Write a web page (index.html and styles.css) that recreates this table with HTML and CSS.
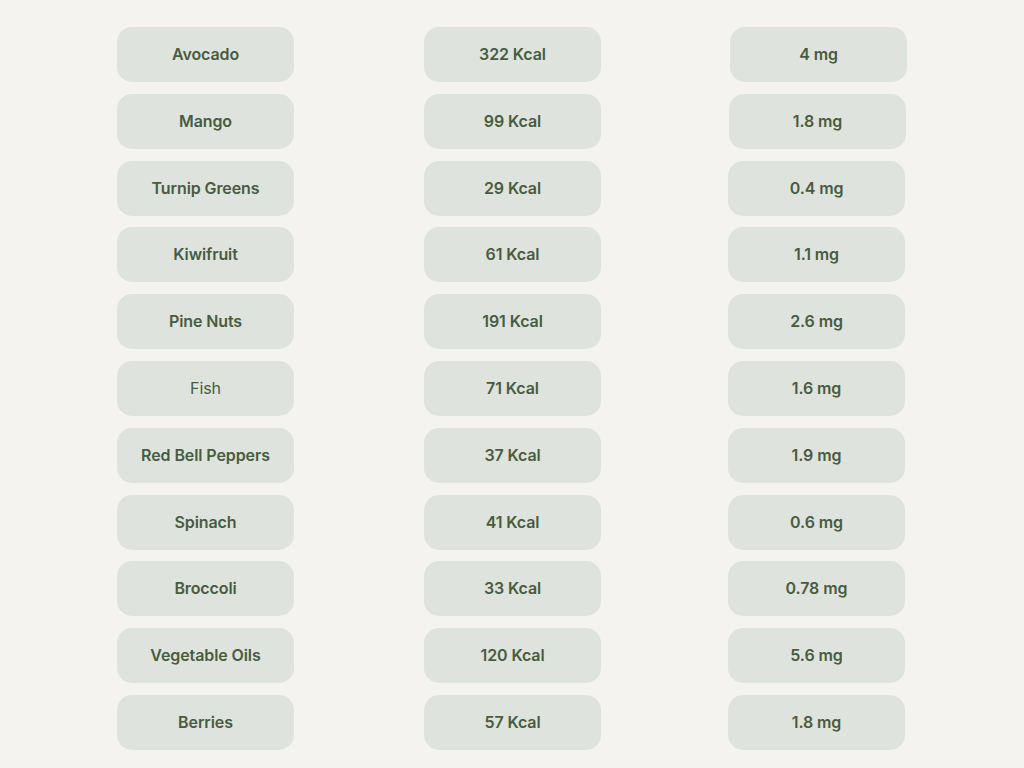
FILE: index.html
```html
<!DOCTYPE html>
<html>
<head>
<meta charset="utf-8">
<link rel="stylesheet" href="styles.css">
</head>
<body>
<div class="table">
  <div class="pill">Avocado</div><div class="pill">322 Kcal</div><div class="pill first">4 mg</div>
  <div class="pill">Mango</div><div class="pill">99 Kcal</div><div class="pill second">1.8 mg</div>
  <div class="pill">Turnip Greens</div><div class="pill">29 Kcal</div><div class="pill">0.4 mg</div>
  <div class="pill">Kiwifruit</div><div class="pill">61 Kcal</div><div class="pill">1.1 mg</div>
  <div class="pill">Pine Nuts</div><div class="pill">191 Kcal</div><div class="pill">2.6 mg</div>
  <div class="pill light">Fish</div><div class="pill">71 Kcal</div><div class="pill">1.6 mg</div>
  <div class="pill">Red Bell Peppers</div><div class="pill">37 Kcal</div><div class="pill">1.9 mg</div>
  <div class="pill">Spinach</div><div class="pill">41 Kcal</div><div class="pill">0.6 mg</div>
  <div class="pill">Broccoli</div><div class="pill">33 Kcal</div><div class="pill">0.78 mg</div>
  <div class="pill">Vegetable Oils</div><div class="pill">120 Kcal</div><div class="pill">5.6 mg</div>
  <div class="pill">Berries</div><div class="pill">57 Kcal</div><div class="pill">1.8 mg</div>
</div>
</body>
</html>
```
FILE: styles.css
```css
html, body {
  margin: 0;
  padding: 0;
  background: #f5f3f0;
}
body {
  font-family: Inter, "Open Sans", sans-serif;
  color: #485c3e;
}
.table {
  padding: 27px 0 0 117px;
  display: grid;
  grid-template-columns: 307px 304px 177px;
  row-gap: 11.8px;
  justify-items: start;
}
.pill {
  width: 177px;
  height: 55px;
  box-sizing: border-box;
  border-radius: 15px;
  background: #dfe3de;
  display: flex;
  align-items: center;
  justify-content: center;
  font-size: 16px;
  font-weight: 600;
  letter-spacing: -0.1px;
  padding-bottom: 1px;
}
.pill.first {
  margin-left: 2px;
}
.pill.second {
  margin-left: 1px;
}
.pill.light {
  font-weight: 400;
}
```
